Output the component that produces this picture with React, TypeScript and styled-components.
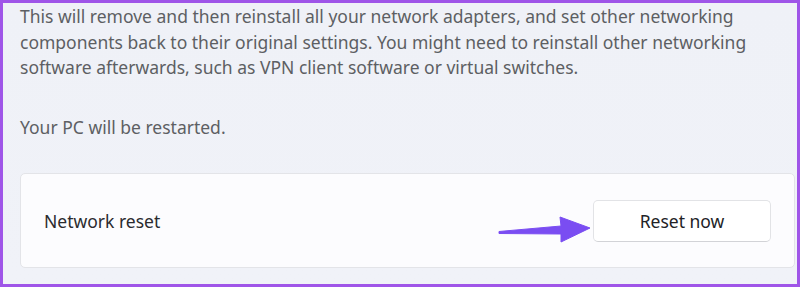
import React from "react";
import styled, { createGlobalStyle } from "styled-components";

const Global = createGlobalStyle`
  html, body { margin: 0; padding: 0; background: #eef1f7; }
  * { box-sizing: border-box; }
`;

const Frame = styled.div`
  width: 800px;
  height: 287px;
  border: 3px solid #9f55e8;
  background: linear-gradient(180deg, #eff1f7 0%, #f0f2f8 100%);
  padding: 1px 3px 0 17px;
  display: flex;
  flex-direction: column;
  font-family: "Noto Sans", "Open Sans", sans-serif;
  overflow: hidden;
`;

const Paragraph = styled.p<{ $gap?: number }>`
  margin: 0 0 ${(p) => p.$gap ?? 0}px 0;
  font-size: 17.5px;
  line-height: 25.5px;
  color: #5d5f63;
  letter-spacing: 0;
`;

const Card = styled.div`
  margin-top: 33px;
  height: 95px;
  width: 775px;
  background: #fcfcfe;
  border: 1px solid #e3e4e8;
  border-radius: 5px;
  display: flex;
  align-items: center;
  padding: 0 23px 0 23px;
`;

const Label = styled.span`
  font-size: 17.5px;
  color: #2b2b2e;
  flex: 1;
`;

const ArrowWrap = styled.div`
  width: 96px;
  height: 30px;
  margin-right: 0px;
  margin-top: 14px;
  display: flex;
`;

const Button = styled.button`
  width: 178px;
  height: 42px;
  background: #ffffff;
  border: 1px solid #e2e3e6;
  border-bottom-color: #d2d3d7;
  border-radius: 5px;
  font-family: inherit;
  font-size: 17.5px;
  color: #222226;
  cursor: pointer;
  padding: 0;
`;

export default function App() {
  return (
    <>
      <Global />
      <Frame>
        <Paragraph $gap={34}>
          This will remove and then reinstall all your network adapters, and set other networking
          components back to their original settings. You might need to reinstall other networking
          software afterwards, such as VPN client software or virtual switches.
        </Paragraph>
        <Paragraph>Your PC will be restarted.</Paragraph>
        <Card>
          <Label>Network reset</Label>
          <ArrowWrap>
            <svg width="96" height="30" viewBox="0 0 96 30">
              <path
                d="M2 18.5 L64 13 L63 4 L93 15 L64 29 L64 21 L2 20.5 Z"
                fill="#7a4df2"
                stroke="#7a4df2"
                strokeWidth="1"
                strokeLinejoin="round"
              />
            </svg>
          </ArrowWrap>
          <Button>Reset now</Button>
        </Card>
      </Frame>
    </>
  );
}
